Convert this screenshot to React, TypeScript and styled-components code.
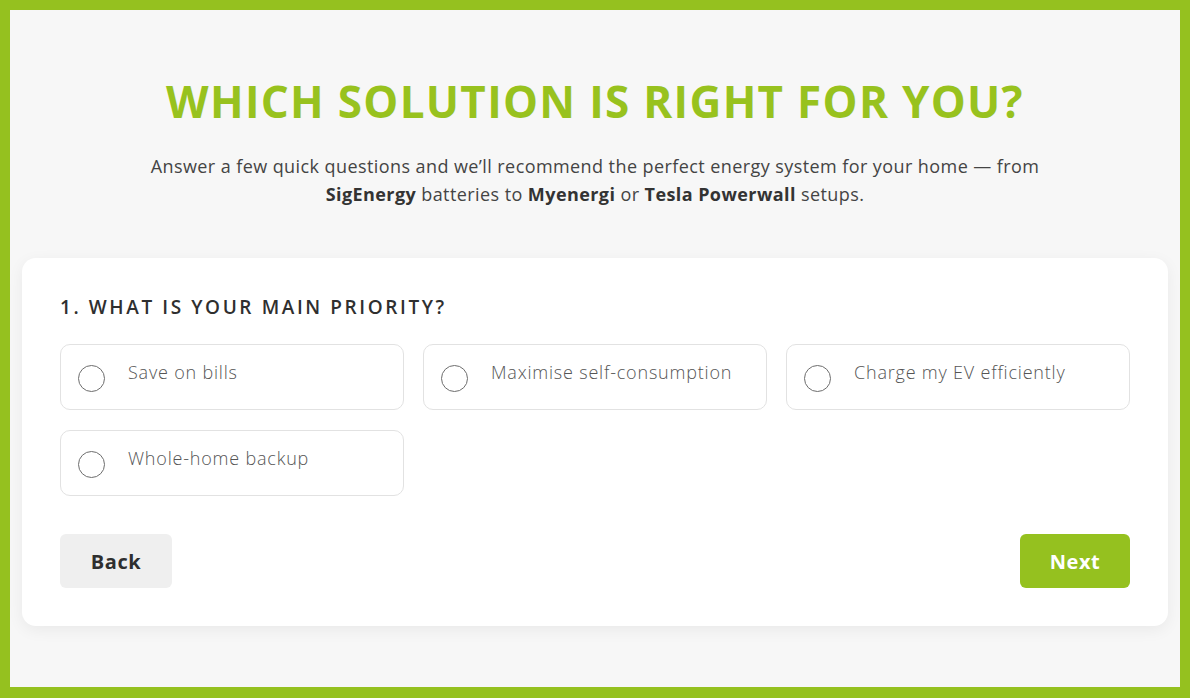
import React from "react";
import styled, { createGlobalStyle } from "styled-components";

const Global = createGlobalStyle`
  * { box-sizing: border-box; }
  html, body { margin: 0; padding: 0; }
  body {
    font-family: "Open Sans", "DejaVu Sans", sans-serif;
    background: #95c11f;
  }
`;

const Frame = styled.div`
  width: 1190px;
  height: 698px;
  border: 10px solid #95c11f;
  border-bottom-width: 11px;
  background: #f7f7f7;
  padding: 63px 12px 0 12px;
  display: flex;
  flex-direction: column;
  align-items: center;
`;

const Title = styled.h1`
  margin: 0;
  font-family: "Open Sans", sans-serif;
  font-weight: 700;
  font-size: 44px;
  line-height: 56px;
  letter-spacing: 1.3px;
  color: #98c21e;
  text-align: center;
`;

const Lead = styled.p`
  margin: 23px 0 0 0;
  font-size: 18px;
  line-height: 28px;
  letter-spacing: 0.42px;
  color: #444;
  text-align: center;
  font-weight: 400;
  width: 940px;
  b { font-weight: 700; color: #333; }
`;

const Card = styled.section`
  margin-top: 50px;
  width: 100%;
  background: #fff;
  border-radius: 14px;
  box-shadow: 0 4px 16px rgba(0, 0, 0, 0.06);
  padding: 36px 38px 38px 38px;
`;

const Question = styled.h2`
  margin: 0;
  font-size: 19px;
  line-height: 26px;
  font-weight: 600;
  letter-spacing: 2.6px;
  color: #2f2f2f;
`;

const Options = styled.div`
  margin-top: 24px;
  display: grid;
  grid-template-columns: repeat(3, 1fr);
  column-gap: 19px;
  row-gap: 20px;
`;

const Option = styled.label`
  height: 66px;
  border: 1px solid #e2e2e2;
  border-radius: 10px;
  display: flex;
  align-items: flex-start;
  padding: 19px 0 0 17px;
  gap: 23px;
  cursor: pointer;
`;

const Radio = styled.span`
  width: 27px;
  height: 27px;
  border-radius: 50%;
  border: 1.5px solid #6d6d6d;
  flex: none;
  margin-top: 1px;
`;

const OptionText = styled.span`
  font-size: 18px;
  line-height: 22px;
  font-weight: 300;
  letter-spacing: 0.8px;
  color: #555;
  margin-top: -3px;
`;

const Actions = styled.div`
  margin-top: 38px;
  display: flex;
  justify-content: space-between;
`;

const Button = styled.button<{ $primary?: boolean }>`
  height: 54px;
  padding: 0 28px;
  border: none;
  border-radius: 6px;
  font-family: inherit;
  font-size: 20px;
  font-weight: 700;
  letter-spacing: 0.6px;
  background: ${(p) => (p.$primary ? "#95c11f" : "#efefef")};
  color: ${(p) => (p.$primary ? "#fff" : "#2f2f2f")};
  min-width: ${(p) => (p.$primary ? "110px" : "112px")};
`;

const options = [
  "Save on bills",
  "Maximise self-consumption",
  "Charge my EV efficiently",
  "Whole-home backup",
];

export default function App() {
  return (
    <>
      <Global />
      <Frame>
        <Title>WHICH SOLUTION IS RIGHT FOR YOU?</Title>
        <Lead>
          Answer a few quick questions and we’ll recommend the perfect energy system for your home — from{" "}
          <b>SigEnergy</b> batteries to <b>Myenergi</b> or <b>Tesla Powerwall</b> setups.
        </Lead>
        <Card>
          <Question>1. WHAT IS YOUR MAIN PRIORITY?</Question>
          <Options>
            {options.map((o) => (
              <Option key={o}>
                <Radio />
                <OptionText>{o}</OptionText>
              </Option>
            ))}
          </Options>
          <Actions>
            <Button>Back</Button>
            <Button $primary>Next</Button>
          </Actions>
        </Card>
      </Frame>
    </>
  );
}
